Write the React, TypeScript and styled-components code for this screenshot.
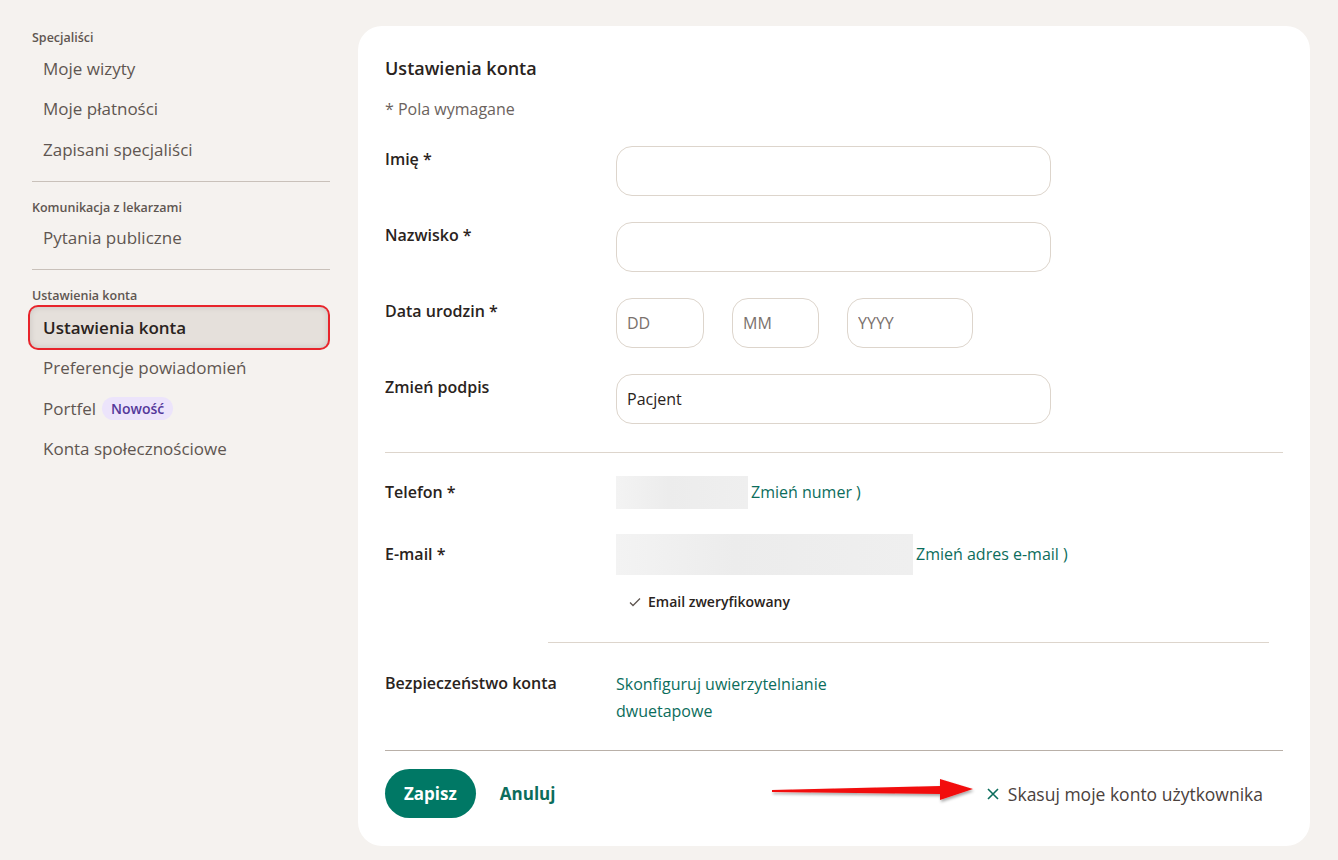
import React from "react";
import styled, { createGlobalStyle } from "styled-components";

const GlobalStyle = createGlobalStyle`
  html, body {
    margin: 0;
    padding: 0;
    background: #f5f2ef;
    font-family: "Open Sans", "Noto Sans", sans-serif;
    color: #2a2320;
  }
  * { box-sizing: border-box; }
`;

const Page = styled.div`
  display: flex;
  align-items: flex-start;
  padding: 26px 28px 14px 30px;
  gap: 28px;
  min-height: 860px;
`;

const Sidebar = styled.nav`
  width: 300px;
  flex-shrink: 0;
  display: flex;
  flex-direction: column;
  padding-top: 3px;
`;

const SectionTitle = styled.div`
  font-size: 12.5px;
  font-weight: 600;
  color: #5f5651;
  padding-left: 2px;
  margin-bottom: 2px;
`;

const NavItem = styled.div<{ $active?: boolean }>`
  display: flex;
  align-items: center;
  gap: 6px;
  height: 40.5px;
  padding-left: 13px;
  font-size: 17px;
  color: ${(p) => (p.$active ? "#2a2320" : "#5f5651")};
  font-weight: ${(p) => (p.$active ? 600 : 400)};
  border-radius: 8px;
  ${(p) =>
    p.$active &&
    `
    background: #e5e0db;
    box-shadow: 0 0 0 2px #e8242b, inset 0 0 6px rgba(0,0,0,0.12);
    margin: 1px 2px 0 0;
  `}
`;

const Badge = styled.span`
  background: #ece4fb;
  color: #54389a;
  font-size: 14px;
  font-weight: 600;
  padding: 2px 9px;
  border-radius: 12px;
`;

const Divider = styled.hr<{ $tone?: string }>`
  border: none;
  border-top: 1px solid ${(p) => p.$tone || "#c9c1ba"};
  margin: 0;
`;

const SideDivider = styled(Divider)`
  margin: 11px 0 17px 2px;
`;

const Card = styled.main`
  flex: 1;
  background: #fff;
  border-radius: 24px;
  padding: 30px 27px 28px 27px;
  display: flex;
  flex-direction: column;
`;

const CardTitle = styled.h2`
  margin: 0;
  font-size: 18px;
  font-weight: 600;
  color: #2a2320;
`;

const Hint = styled.div`
  margin-top: 18px;
  font-size: 16px;
  color: #6b625d;
`;

const FormRow = styled.div<{ $gap?: number }>`
  display: grid;
  grid-template-columns: 231px 1fr;
  align-items: start;
  margin-top: ${(p) => p.$gap ?? 26}px;
`;

const Label = styled.div<{ $pt?: number }>`
  font-size: 16px;
  font-weight: 600;
  color: #2a2320;
  padding-top: ${(p) => p.$pt ?? 1}px;
`;

const Input = styled.input<{ $w?: number }>`
  width: ${(p) => p.$w ?? 435}px;
  height: 50px;
  border: 1px solid #ddd5cc;
  border-radius: 16px;
  padding: 0 10px;
  font-family: inherit;
  font-size: 16px;
  color: #2a2320;
  background: #fff;
  outline: none;
  &::placeholder {
    color: #7a716c;
  }
`;

const DateGroup = styled.div`
  display: flex;
  gap: 28px;
`;

const Value = styled.div`
  display: flex;
  align-items: center;
  font-size: 16px;
`;

// blurred-out contact value
const Masked = styled.span<{ $w: number; $h: number }>`
  display: inline-block;
  width: ${(p) => p.$w}px;
  height: ${(p) => p.$h}px;
  margin-right: 3px;
  background: linear-gradient(90deg, #f3f3f3, #ececec 40%, #efefef);
  filter: blur(0.6px);
`;

const Link = styled.a`
  color: #0c6d5c;
  text-decoration: none;
  font-size: 16px;
  line-height: 27px;
`;

const Verified = styled.div`
  display: flex;
  align-items: center;
  gap: 6px;
  margin: 17px 0 0 243px;
  font-size: 14px;
  font-weight: 600;
  color: #2a2320;
`;

const Actions = styled.div`
  display: flex;
  align-items: center;
  margin-top: 18px;
  padding-right: 20px;
`;

const PrimaryButton = styled.button`
  height: 49px;
  padding: 0 19px;
  border: none;
  border-radius: 25px;
  background: #007865;
  color: #fff;
  font-family: inherit;
  font-size: 17px;
  font-weight: 700;
`;

const TextButton = styled.button`
  margin-left: 24px;
  border: none;
  background: none;
  color: #0c6d5c;
  font-family: inherit;
  font-size: 17px;
  font-weight: 700;
  padding: 0;
`;

const DeleteLink = styled.div`
  margin-left: auto;
  display: flex;
  align-items: center;
  gap: 8px;
  font-size: 17.5px;
  color: #4a413c;
  position: relative;
`;

const Pointer = styled.svg`
  position: absolute;
  right: calc(100% + 6px);
  top: -6px;
`;

const ArrowPointer = () => (
  <Pointer width="210" height="30" viewBox="0 0 210 30">
    <defs>
      <filter id="sh" x="-10%" y="-50%" width="120%" height="200%">
        <feDropShadow dx="1" dy="2" stdDeviation="1.5" floodOpacity="0.35" />
      </filter>
    </defs>
    <polygon
      points="2,14 170,10 170,3 203,13 170,24 170,18 2,16"
      fill="#f20f0f"
      filter="url(#sh)"
    />
  </Pointer>
);

const sideSections = [
  {
    title: "Specjaliści",
    items: ["Moje wizyty", "Moje płatności", "Zapisani specjaliści"],
  },
  { title: "Komunikacja z lekarzami", items: ["Pytania publiczne"] },
];

export default function App() {
  return (
    <>
      <GlobalStyle />
      <Page>
        <Sidebar>
          {sideSections.map((s) => (
            <React.Fragment key={s.title}>
              <SectionTitle>{s.title}</SectionTitle>
              {s.items.map((i) => (
                <NavItem key={i}>{i}</NavItem>
              ))}
              <SideDivider />
            </React.Fragment>
          ))}
          <SectionTitle>Ustawienia konta</SectionTitle>
          <NavItem $active>Ustawienia konta</NavItem>
          <NavItem>Preferencje powiadomień</NavItem>
          <NavItem>
            Portfel <Badge>Nowość</Badge>
          </NavItem>
          <NavItem>Konta społecznościowe</NavItem>
        </Sidebar>

        <Card>
          <CardTitle>Ustawienia konta</CardTitle>
          <Hint>* Pola wymagane</Hint>

          <FormRow $gap={26}>
            <Label $pt={2}>Imię *</Label>
            <Input />
          </FormRow>
          <FormRow>
            <Label $pt={2}>Nazwisko *</Label>
            <Input />
          </FormRow>
          <FormRow>
            <Label $pt={2}>Data urodzin *</Label>
            <DateGroup>
              <Input $w={88} placeholder="DD" />
              <Input $w={87} placeholder="MM" />
              <Input $w={126} placeholder="YYYY" />
            </DateGroup>
          </FormRow>
          <FormRow>
            <Label $pt={2}>Zmień podpis</Label>
            <Input defaultValue="Pacjent" />
          </FormRow>

          <Divider $tone="#ddd5cc" style={{ marginTop: 28 }} />

          <FormRow $gap={23}>
            <Label $pt={5}>Telefon *</Label>
            <Value>
              <Masked $w={132} $h={33} />
              <Link href="#">Zmień numer )</Link>
            </Value>
          </FormRow>
          <FormRow $gap={25}>
            <Label $pt={9}>E-mail *</Label>
            <Value>
              <Masked $w={297} $h={41} />
              <Link href="#">Zmień adres e-mail )</Link>
            </Value>
          </FormRow>
          <Verified>
            <svg width="14" height="14" viewBox="0 0 14 14">
              <path d="M2 7.5l3 3L12 3.5" fill="none" stroke="#5f5651" strokeWidth="1.3" />
            </svg>
            Email zweryfikowany
          </Verified>

          <Divider $tone="#ddd5cc" style={{ margin: "31px 14px 0 163px" }} />

          <FormRow $gap={28}>
            <Label>Bezpieczeństwo konta</Label>
            <div>
              <Link href="#">
                Skonfiguruj uwierzytelnianie
                <br />
                dwuetapowe
              </Link>
            </div>
          </FormRow>

          <Divider $tone="#b9b0a8" style={{ marginTop: 25 }} />

          <Actions>
            <PrimaryButton>Zapisz</PrimaryButton>
            <TextButton>Anuluj</TextButton>
            <DeleteLink>
              <ArrowPointer />
              <svg width="14" height="14" viewBox="0 0 14 14">
                <path d="M2 2l10 10M12 2L2 12" stroke="#0c6d5c" strokeWidth="1.6" />
              </svg>
              Skasuj moje konto użytkownika
            </DeleteLink>
          </Actions>
        </Card>
      </Page>
    </>
  );
}
